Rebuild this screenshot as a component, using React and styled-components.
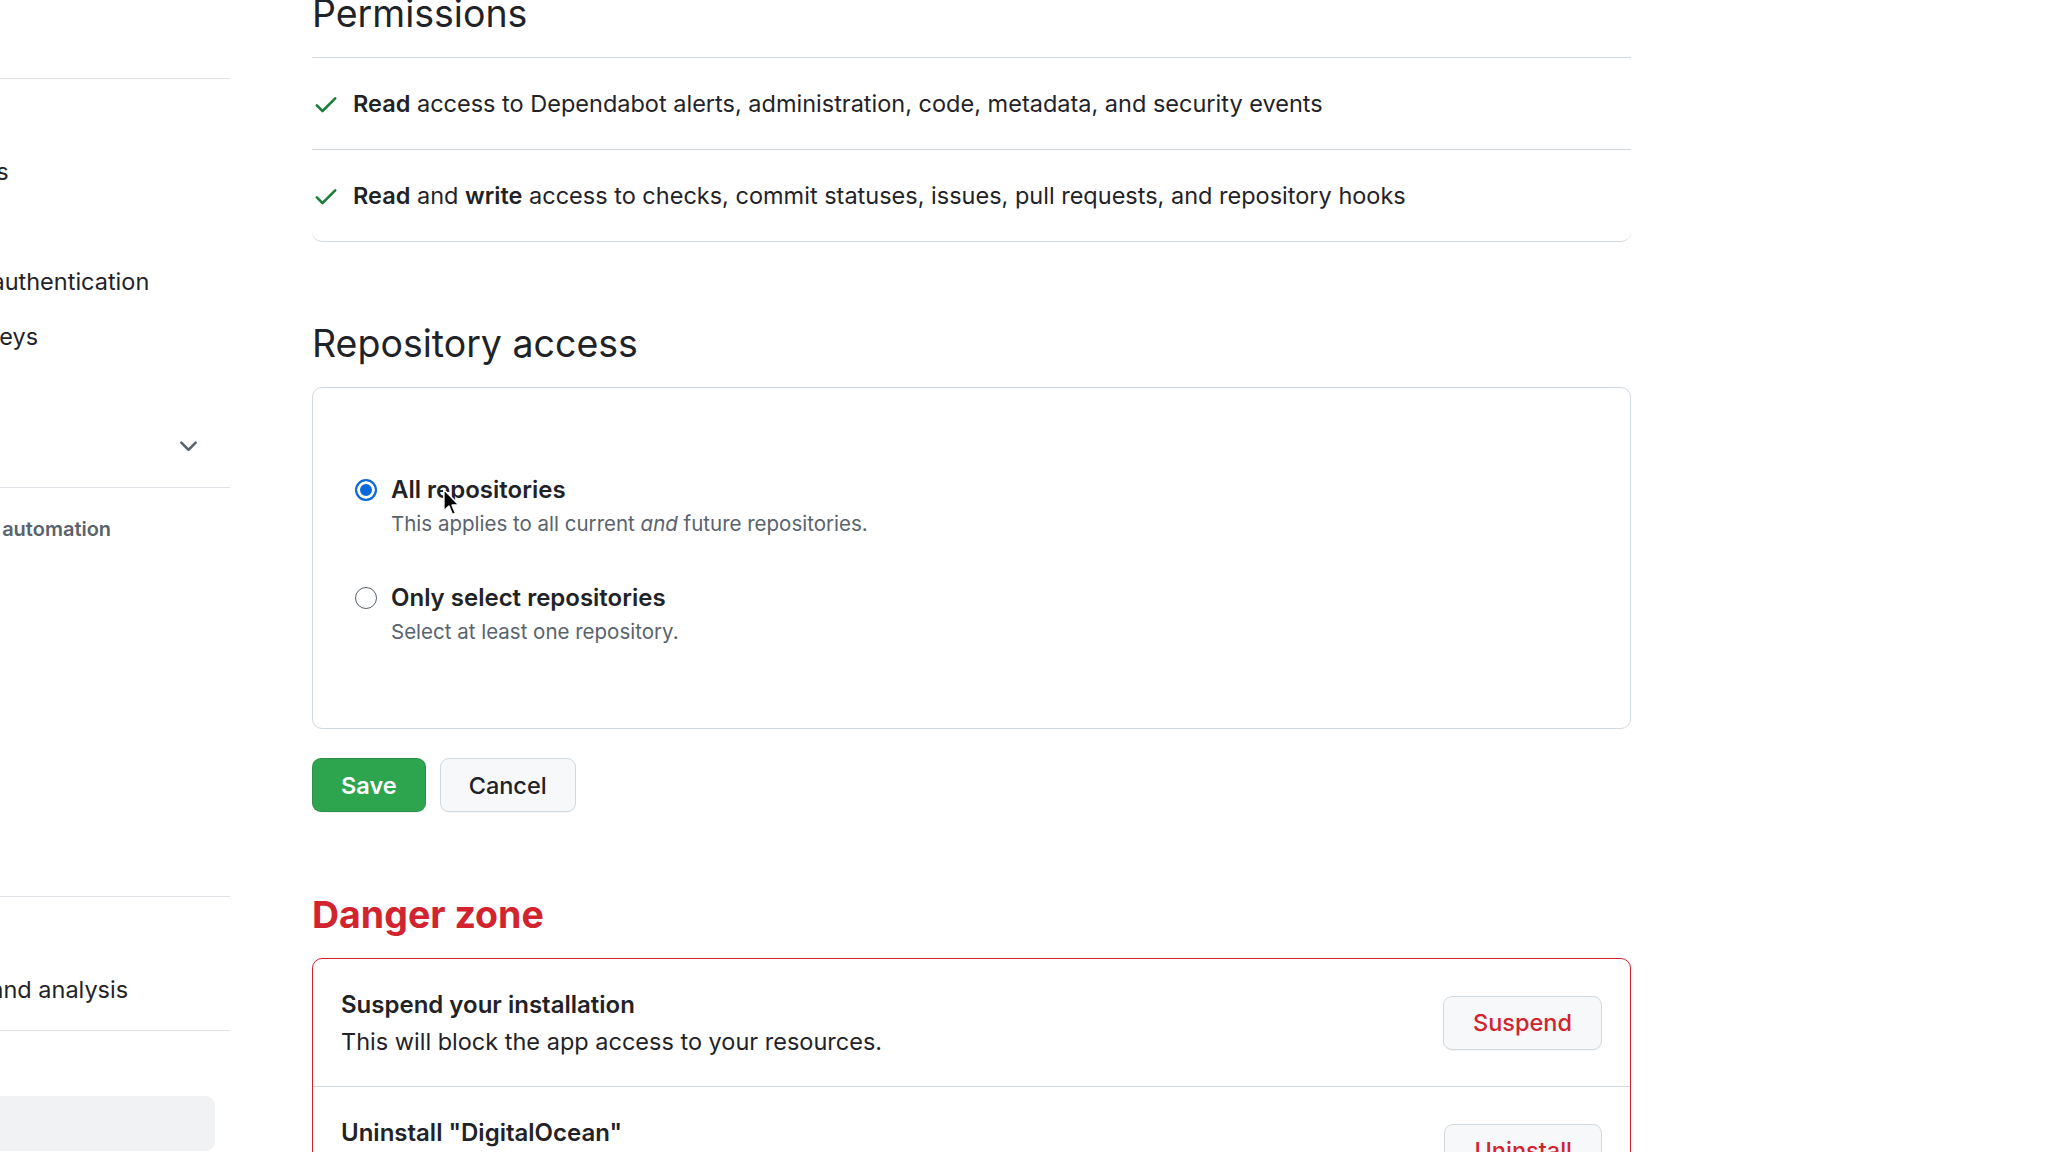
import React from "react";
import styled, { createGlobalStyle } from "styled-components";

const GlobalStyle = createGlobalStyle`
  html, body { margin: 0; padding: 0; background: #ffffff; overflow: hidden; }
  body { font-family: Inter, "Liberation Sans", Arial, sans-serif; color: #1f2328; }
  #root { height: 1152px; overflow: hidden; }
  * { box-sizing: border-box; }
`;

const Layout = styled.div`
  display: flex;
  align-items: flex-start;
  gap: 82px;
  margin-top: -9px;
`;

const Sidebar = styled.nav`
  width: 418px;
  margin-left: -188px;
  flex-shrink: 0;
`;

const SideSection = styled.div`
  padding: ${(p) => (p.$first ? "20px" : "16px")} 0 ${(p) => (p.$first ? "12px" : "13px")};
  & + & { border-top: 1px solid #dfe3e8; }
`;

const SideHeading = styled.div`
  font-size: 20px;
  font-weight: 600;
  color: #59636e;
  line-height: 34px;
  padding: 8px 0 7px 16px;
  text-indent: ${(p) => p.$indent || 0}px;
  white-space: nowrap;
`;

const SideItem = styled.div`
  height: 55px;
  display: flex;
  align-items: center;
  justify-content: space-between;
  padding: 0 13px 0 16px;
  margin-right: 15px;
  font-size: 23.5px;
  color: #1f2328;
  white-space: nowrap;
  border-radius: 9px;
  background: ${(p) => (p.$selected ? "#f0f2f4" : "transparent")};
  svg { flex-shrink: 0; }
`;

const Main = styled.main`
  width: 1319px;
  flex-shrink: 0;
`;

const SectionHeading = styled.h2`
  margin: ${(p) => p.$mt || 0}px 0 0;
  font-size: 37.5px;
  line-height: 46px;
  font-weight: ${(p) => (p.$danger ? 700 : 400)};
  color: ${(p) => (p.$danger ? "#d1242f" : "#1f2328")};
  padding-bottom: ${(p) => (p.$divided ? "20px" : "0")};
  border-bottom: ${(p) => (p.$divided ? "1px solid #d1d9e0" : "none")};
`;

const PermList = styled.div`
  border-bottom: 1px solid #d1d9e0;
  border-radius: 0 0 10px 10px;
`;

const PermRow = styled.div`
  height: 91px;
  display: flex;
  align-items: center;
  gap: 13px;
  font-size: 23.5px;
  color: #1f2328;
  & + & { border-top: 1px solid #d1d9e0; height: 92px; }
  b { font-weight: 600; }
  svg { flex-shrink: 0; }
`;

const RepoBox = styled.div`
  position: relative;
  margin-top: 20px;
  border: 1px solid #d1d9e0;
  border-radius: 10px;
  padding: 86px 42px 82px;
  display: flex;
  flex-direction: column;
  gap: 44px;
`;

const Option = styled.label`
  display: grid;
  grid-template-columns: 22px 1fr;
  column-gap: 14px;
  align-items: center;
`;

const Radio = styled.span`
  width: 22px;
  height: 22px;
  border-radius: 50%;
  border: ${(p) => (p.$checked ? "2px solid #0969da" : "1.5px solid #59636e")};
  background: ${(p) => (p.$checked ? "#0969da" : "#ffffff")};
  box-shadow: ${(p) => (p.$checked ? "inset 0 0 0 3px #ffffff" : "none")};
`;

const OptionLabel = styled.span`
  font-size: 24px;
  font-weight: 600;
  line-height: 32px;
  color: #1f2328;
`;

const OptionDesc = styled.span`
  grid-column: 2;
  margin-top: 4px;
  font-size: 20.5px;
  line-height: 28px;
  color: #59636e;
`;

const Cursor = styled.svg`
  position: absolute;
  left: 129px;
  top: 100px;
  pointer-events: none;
`;

const Actions = styled.div`
  display: flex;
  gap: 14px;
  margin-top: 29px;
`;

const Button = styled.button`
  height: 54px;
  padding: 0 ${(p) => p.$px || 30}px;
  border-radius: 9px;
  font-family: inherit;
  font-size: 23.5px;
  font-weight: ${(p) => (p.$primary ? 600 : 500)};
  color: ${(p) => (p.$primary ? "#ffffff" : p.$danger ? "#d1242f" : "#1f2328")};
  background: ${(p) => (p.$primary ? "#2da44e" : "#f6f8fa")};
  border: 1px solid ${(p) => (p.$primary ? "rgba(31,35,40,0.15)" : "#d1d9e0")};
  box-shadow: 0 1px 0 rgba(31,35,40,0.04);
  cursor: pointer;
  flex-shrink: 0;
`;

const DangerBox = styled.div`
  margin-top: 20px;
  border: 1px solid #cf222e;
  border-radius: 10px;
`;

const DangerRow = styled.div`
  height: 127px;
  display: flex;
  align-items: center;
  justify-content: space-between;
  padding: 0 28px;
  & + & { border-top: 1px solid #d1d9e0; height: 128px; }
`;

const DangerText = styled.div`
  display: flex;
  flex-direction: column;
  margin-top: 3px;
`;

const DangerTitle = styled.strong`
  font-size: 24px;
  line-height: 36px;
  font-weight: 600;
  color: #1f2328;
`;

const DangerDesc = styled.span`
  font-size: 23.5px;
  line-height: 38px;
  color: #1f2328;
`;

const Check = () => (
  <svg width="28" height="28" viewBox="0 0 16 16" fill="#1a7f37">
    <path d="M13.78 4.22a.75.75 0 0 1 0 1.06l-7.25 7.25a.75.75 0 0 1-1.06 0L2.22 9.28a.751.751 0 0 1 .018-1.042.751.751 0 0 1 1.042-.018L6 10.94l6.72-6.72a.75.75 0 0 1 1.06 0Z" />
  </svg>
);

const ChevronDown = () => (
  <svg width="27" height="27" viewBox="0 0 16 16" fill="#59636e">
    <path d="M12.78 5.22a.749.749 0 0 1 0 1.06l-4.25 4.25a.749.749 0 0 1-1.06 0L3.22 6.28a.749.749 0 1 1 1.06-1.06L8 8.94l3.72-3.72a.749.749 0 0 1 1.06 0Z" />
  </svg>
);

const sections = [
  { items: ["Notifications"] },
  {
    heading: "Access",
    items: [
      "Billing and plans",
      "Emails",
      "Password and authentication",
      "SSH and GPG keys",
      "Organizations",
      { label: "Moderation", chevron: true },
    ],
  },
  {
    heading: "Code, planning, and automation",
    indent: -24,
    items: ["Repositories", "Codespaces", "Packages", "Copilot", "Pages", "Saved replies"],
  },
  { heading: "Security", items: ["Code security and analysis"] },
  { heading: "Integrations", items: [{ label: "Applications", selected: true }] },
];

export default function App() {
  return (
    <>
      <GlobalStyle />
      <Layout>
        <Sidebar>
          {sections.map((s, i) => (
            <SideSection key={i} $first={i === 0}>
              {s.heading && <SideHeading $indent={s.indent}>{s.heading}</SideHeading>}
              {s.items.map((it) => {
                const item = typeof it === "string" ? { label: it } : it;
                return (
                  <SideItem key={item.label} $selected={item.selected}>
                    <span>{item.label}</span>
                    {item.chevron && <ChevronDown />}
                  </SideItem>
                );
              })}
            </SideSection>
          ))}
        </Sidebar>

        <Main>
          <SectionHeading $divided>Permissions</SectionHeading>
          <PermList>
            <PermRow>
              <Check />
              <span>
                <b>Read</b> access to Dependabot alerts, administration, code, metadata, and security events
              </span>
            </PermRow>
            <PermRow>
              <Check />
              <span>
                <b>Read</b> and <b>write</b> access to checks, commit statuses, issues, pull requests, and repository hooks
              </span>
            </PermRow>
          </PermList>

          <SectionHeading $mt={79}>Repository access</SectionHeading>
          <RepoBox>
            <Option>
              <Radio $checked />
              <OptionLabel>All repositories</OptionLabel>
              <OptionDesc>
                This applies to all current <i>and</i> future repositories.
              </OptionDesc>
            </Option>
            <Option>
              <Radio />
              <OptionLabel>Only select repositories</OptionLabel>
              <OptionDesc>Select at least one repository.</OptionDesc>
            </Option>
            <Cursor width="19" height="29" viewBox="0 0 12 19">
              <path d="M1 1 L1 15 L4.3 11.9 L6.6 17.4 L8.6 16.5 L6.4 11.2 L10.8 11.2 Z" fill="#000" stroke="#fff" strokeWidth="1" strokeLinejoin="round" />
            </Cursor>
          </RepoBox>

          <Actions>
            <Button $primary $px={28}>Save</Button>
            <Button $px={28}>Cancel</Button>
          </Actions>

          <SectionHeading $danger $mt={80}>Danger zone</SectionHeading>
          <DangerBox>
            <DangerRow>
              <DangerText>
                <DangerTitle>Suspend your installation</DangerTitle>
                <DangerDesc>This will block the app access to your resources.</DangerDesc>
              </DangerText>
              <Button $danger $px={29}>Suspend</Button>
            </DangerRow>
            <DangerRow>
              <DangerText>
                <DangerTitle>Uninstall "DigitalOcean"</DangerTitle>
                <DangerDesc>This will remove the app and revoke access to all resources.</DangerDesc>
              </DangerText>
              <Button $danger $px={29}>Uninstall</Button>
            </DangerRow>
          </DangerBox>
        </Main>
      </Layout>
    </>
  );
}
